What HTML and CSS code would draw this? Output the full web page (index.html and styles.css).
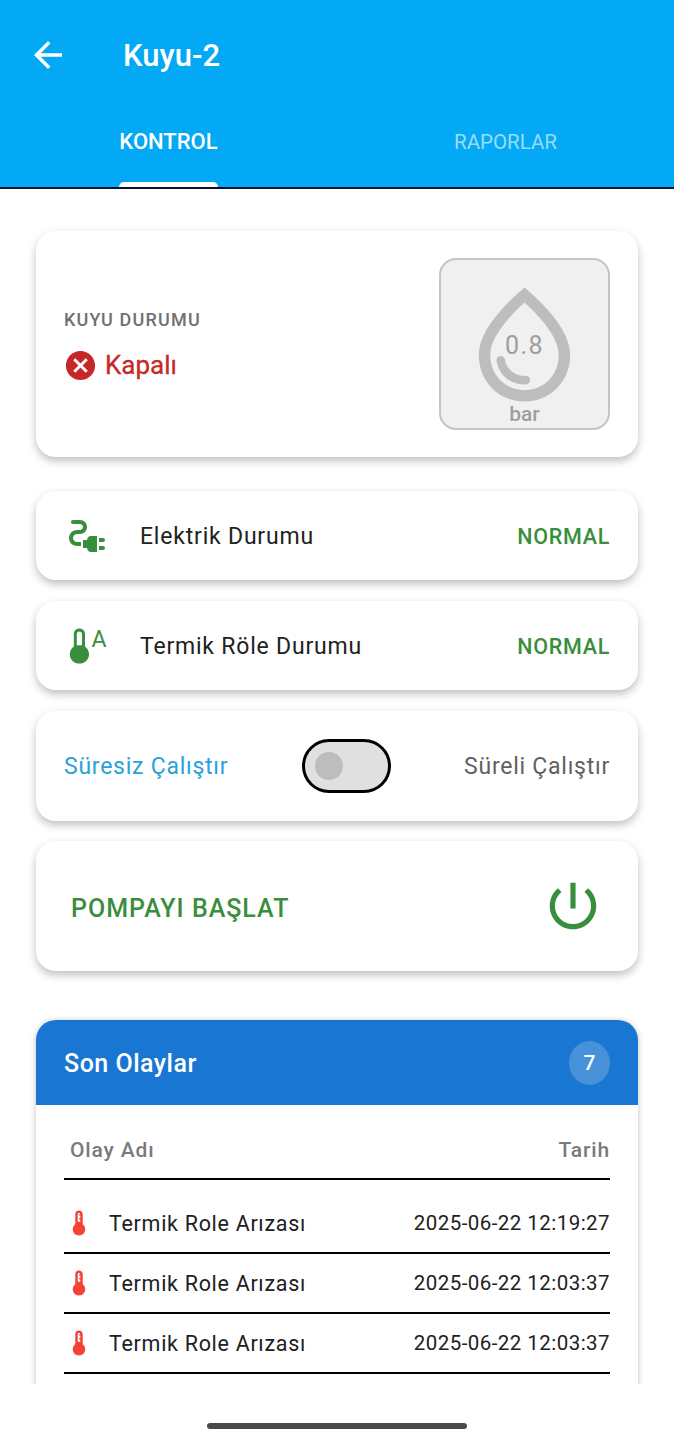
FILE: index.html
```html
<!DOCTYPE html>
<html lang="tr">
<head>
    <meta charset="UTF-8">
    <meta name="viewport" content="width=device-width, initial-scale=1.0">
    <title>Kuyu-2</title>
    <link rel="stylesheet" href="styles.css">
</head>
<body>
    <header class="app-header">
        <div class="top-bar">
            <svg class="back-icon" viewBox="0 0 24 24"><path d="M20 11H7.83l5.59-5.59L12 4l-8 8 8 8 1.41-1.41L7.83 13H20v-2z"/></svg>
            <h1 class="page-title">Kuyu-2</h1>
        </div>
        <nav class="tabs">
            <div class="tab"><span class="tab-label active">KONTROL</span></div>
            <div class="tab"><span class="tab-label">RAPORLAR</span></div>
        </nav>
    </header>

    <main class="content">
        <section class="card status-card">
            <div class="status-info">
                <div class="status-title">KUYU DURUMU</div>
                <div class="status-value">
                    <svg class="cancel-icon" viewBox="0 0 24 24"><path d="M12 2C6.47 2 2 6.47 2 12s4.47 10 10 10 10-4.47 10-10S17.53 2 12 2zm5 13.59L15.59 17 12 13.41 8.41 17 7 15.59 10.59 12 7 8.41 8.41 7 12 10.59 15.59 7 17 8.41 13.41 12 17 15.59z"/></svg>
                    <span>Kapalı</span>
                </div>
            </div>
            <div class="gauge">
                <svg class="drop-icon" viewBox="0 0 24 24"><path d="M12,2c-5.33,4.55-8,8.48-8,11.8c0,4.98,3.8,8.2,8,8.2s8-3.22,8-8.2C20,10.48,17.33,6.55,12,2z M12,20c-3.35,0-6-2.57-6-6.2c0-2.34,1.95-5.44,6-9.14c4.05,3.7,6,6.79,6,9.14C18,17.43,15.35,20,12,20z M7.83,14c.37,0,.67.26.74.62.41,2.22,2.28,2.98,3.64,2.87.43-.02.79.32.79.75,0,.4-.32.73-.72.75-2.13.13-4.62-1.09-5.19-4.12C7.01,14.42,7.37,14,7.83,14z"/></svg>
                <span class="gauge-value">0.8</span>
                <span class="gauge-unit">bar</span>
            </div>
        </section>

        <section class="card info-card first-info">
            <svg class="info-icon" viewBox="0 0 24 24"><path d="M21 14c0-.55-.45-1-1-1h-2v2h2c.55 0 1-.45 1-1zm-1 3h-2v2h2c.55 0 1-.45 1-1s-.45-1-1-1zm-8-3h-2v4h2c0 1.1.9 2 2 2h3v-8h-3c-1.1 0-2 .9-2 2z"/><path d="M5 13c0-1.1.9-2 2-2h1.5c1.93 0 3.5-1.57 3.5-3.5S10.43 4 8.5 4H5c-.55 0-1 .45-1 1s.45 1 1 1h3.5c.83 0 1.5.67 1.5 1.5S9.33 9 8.5 9H7c-2.21 0-4 1.79-4 4s1.79 4 4 4h2v-2H7c-1.1 0-2-.9-2-2z"/></svg>
            <span class="info-label">Elektrik Durumu</span>
            <span class="info-state">NORMAL</span>
        </section>

        <section class="card info-card">
            <svg class="info-icon" viewBox="0 0 24 24"><path fill-rule="evenodd" d="M8.200 3.200C6.600 3.200 5.400 4.400 5.400 6V12.300C4.100 13.200 3.400 14.700 3.400 16.100 3.400 18.700 5.500 20.800 8.200 20.800 10.900 20.800 13 18.700 13 16.100 13 14.700 12.300 13.200 11 12.300V6C11 4.400 9.800 3.200 8.200 3.200zM8.200 4.700C8.900 4.700 9.500 5.300 9.500 6V11.600H6.900V6C6.900 5.300 7.500 4.700 8.200 4.700z"/><text class="thermo-letter" x="14.300" y="12.500">A</text></svg>
            <span class="info-label">Termik Röle Durumu</span>
            <span class="info-state">NORMAL</span>
        </section>

        <section class="card mode-card">
            <span class="mode-active">Süresiz Çalıştır</span>
            <div class="switch"><div class="switch-thumb"></div></div>
            <span class="mode-idle">Süreli Çalıştır</span>
        </section>

        <section class="card pump-card">
            <span class="pump-label">POMPAYI BAŞLAT</span>
            <svg class="power-icon" viewBox="0 0 24 24"><path d="M13 3h-2v10h2V3zm4.830 2.170l-1.420 1.420C17.990 7.860 19 9.810 19 12c0 3.870-3.130 7-7 7s-7-3.130-7-7c0-2.190 1.010-4.140 2.580-5.420L6.170 5.170C4.230 6.820 3 9.260 3 12c0 4.970 4.030 9 9 9s9-4.030 9-9c0-2.740-1.230-5.180-3.170-6.830z"/></svg>
        </section>

        <section class="events-card">
            <div class="events-head">
                <span class="events-title">Son Olaylar</span>
                <span class="events-badge">7</span>
            </div>
            <table class="events-table">
                <thead>
                    <tr>
                        <th class="col-name">Olay Adı</th>
                        <th class="col-date">Tarih</th>
                    </tr>
                </thead>
                <tbody>
                    <tr>
                        <td><div class="event-name"><svg class="event-icon" viewBox="0 0 24 24"><path d="M15 13V5c0-1.660-1.340-3-3-3S9 3.340 9 5v8c-1.210.910-2 2.370-2 4 0 2.760 2.240 5 5 5s5-2.240 5-5c0-1.630-.790-3.090-2-4zm-4-8c0-.550.450-1 1-1s1 .450 1 1h-1v1h1v2h-1v1h1v2h-2V5z"/></svg>Termik Role Arızası</div></td>
                        <td class="col-date">2025-06-22 12:19:27</td>
                    </tr>
                    <tr>
                        <td><div class="event-name"><svg class="event-icon" viewBox="0 0 24 24"><path d="M15 13V5c0-1.660-1.340-3-3-3S9 3.340 9 5v8c-1.210.910-2 2.370-2 4 0 2.760 2.240 5 5 5s5-2.240 5-5c0-1.630-.790-3.090-2-4zm-4-8c0-.550.450-1 1-1s1 .450 1 1h-1v1h1v2h-1v1h1v2h-2V5z"/></svg>Termik Role Arızası</div></td>
                        <td class="col-date">2025-06-22 12:03:37</td>
                    </tr>
                    <tr>
                        <td><div class="event-name"><svg class="event-icon" viewBox="0 0 24 24"><path d="M15 13V5c0-1.660-1.340-3-3-3S9 3.340 9 5v8c-1.210.910-2 2.370-2 4 0 2.760 2.240 5 5 5s5-2.240 5-5c0-1.630-.790-3.090-2-4zm-4-8c0-.550.450-1 1-1s1 .450 1 1h-1v1h1v2h-1v1h1v2h-2V5z"/></svg>Termik Role Arızası</div></td>
                        <td class="col-date">2025-06-22 12:03:37</td>
                    </tr>
                </tbody>
            </table>
        </section>
    </main>

    <footer class="home-area"><div class="home-bar"></div></footer>
</body>
</html>
```

FILE: styles.css
```css
* {
    box-sizing: border-box;
}
body {
    font-family: Roboto, sans-serif;
    margin: 0;
    width: 674px;
    height: 1440px;
    overflow: hidden;
    background: #fff;
}

/* Header */
.app-header {
    background: #03a9f4;
    border-bottom: 2px solid #0a1230;
    height: 189px;
}
.top-bar {
    display: flex;
    align-items: center;
    height: 110px;
    padding-left: 27px;
}
.back-icon {
    width: 42px;
    height: 42px;
    fill: #fff;
}
.page-title {
    margin: 0 0 0 54px;
    font-size: 31px;
    font-weight: 500;
    color: #fff;
}
.tabs {
    display: flex;
    height: 77px;
}
.tab {
    flex: 1;
    display: flex;
    justify-content: center;
}
.tab-label {
    position: relative;
    padding-top: 20px;
    font-size: 20.500px;
    line-height: 24px;
    color: rgba(255, 255, 255, 0.6);
}
.tab-label.active {
    font-size: 22px;
    font-weight: 500;
    color: #fff;
}
.tab-label.active::after {
    content: "";
    position: absolute;
    left: 0;
    right: 0;
    bottom: 0;
    height: 5px;
    background: #fff;
    border-radius: 5px 5px 0 0;
}

/* Content */
.content {
    height: 1195px;
    padding: 42px 36px 0;
    overflow: hidden;
}
.card {
    display: flex;
    align-items: center;
    background: #fff;
    border-radius: 20px;
    box-shadow: 0 4px 8px rgba(0, 0, 0, 0.25);
}
.status-card {
    justify-content: space-between;
    height: 226px;
    padding: 0 28px;
}
.status-info {
    padding-top: 3px;
}
.status-title {
    font-size: 18px;
    font-weight: 500;
    letter-spacing: 1.2px;
    color: #707070;
}
.status-value {
    display: flex;
    align-items: center;
    gap: 7px;
    margin-top: 18px;
    font-size: 26px;
    color: #c62828;
}
.status-value span {
    -webkit-text-stroke: 0.3px #c62828;
}
.cancel-icon {
    width: 35px;
    height: 35px;
    margin-left: -1px;
    fill: #c62828;
}
.gauge {
    position: relative;
    width: 171px;
    height: 172px;
    background: #f0f0f0;
    border: 2px solid #c4c4c4;
    border-radius: 17px;
}
.drop-icon {
    position: absolute;
    top: 16px;
    left: 15px;
    width: 137px;
    height: 137px;
    fill: #bdbdbd;
}
.gauge-value {
    position: absolute;
    top: 71px;
    left: 0;
    right: 0;
    text-align: center;
    font-size: 25px;
    line-height: 30px;
    letter-spacing: 1.5px;
    color: #9e9e9e;
}
.gauge-unit {
    position: absolute;
    top: 142px;
    left: 0;
    right: 0;
    text-align: center;
    font-size: 21px;
    line-height: 24px;
    font-weight: 500;
    color: #9e9e9e;
}

.info-card {
    height: 89px;
    margin-top: 21px;
    padding: 0 28px 0 27px;
}
.first-info {
    margin-top: 34px;
}
.info-icon {
    width: 48px;
    height: 48px;
    fill: #388e3c;
}
.thermo-letter {
    font-family: Roboto, sans-serif;
    font-size: 11.500px;
    fill: #388e3c;
}
.info-label {
    flex: 1;
    margin-left: 29px;
    padding-top: 2px;
    font-size: 23px;
    letter-spacing: 0.8px;
    color: #212121;
}
.info-state {
    padding-top: 2px;
    font-size: 21.500px;
    font-weight: 500;
    letter-spacing: 0.7px;
    color: #388e3c;
}

.mode-card {
    justify-content: space-between;
    height: 110px;
    margin-top: 21px;
    padding: 0 28px;
    font-size: 23px;
    letter-spacing: 0.75px;
}
.mode-active {
    color: #29a3d6;
}
.mode-idle {
    color: #616161;
}
.switch {
    display: flex;
    align-items: center;
    width: 89px;
    height: 54px;
    padding-left: 10px;
    background: #e0e0e0;
    border: 3px solid #000;
    border-radius: 27px;
}
.switch-thumb {
    width: 28px;
    height: 28px;
    background: #bdbdbd;
    border-radius: 50%;
}

.pump-card {
    justify-content: space-between;
    height: 130px;
    margin-top: 20px;
    padding: 0 34px 0 35px;
}
.pump-label {
    padding-top: 5px;
    font-size: 25px;
    font-weight: 500;
    letter-spacing: 1px;
    color: #388e3c;
}
.power-icon {
    width: 62px;
    height: 62px;
    fill: #388e3c;
}

/* Son Olaylar */
.events-card {
    margin-top: 49px;
    height: 500px;
    background: #fff;
    border-radius: 20px;
    box-shadow: 0 1px 6px rgba(0, 0, 0, 0.25);
    overflow: hidden;
}
.events-head {
    display: flex;
    justify-content: space-between;
    align-items: center;
    height: 85px;
    padding: 0 28px;
    background: #1976d2;
    color: #fff;
}
.events-title {
    padding-top: 1px;
    font-size: 25px;
    font-weight: 500;
    letter-spacing: 0.5px;
}
.events-badge {
    display: flex;
    align-items: center;
    justify-content: center;
    width: 41px;
    height: 44px;
    background: rgba(255, 255, 255, 0.2);
    border-radius: 50%;
    font-size: 21px;
    font-weight: 500;
}
.events-table {
    width: 546px;
    margin: 0 28px;
    border-collapse: collapse;
}
.events-table th {
    height: 74px;
    padding: 16px 0 0;
    font-size: 21px;
    font-weight: 500;
    letter-spacing: 0.85px;
    color: #7a7a7a;
    border-bottom: 2px solid #000;
}
.events-table .col-name {
    text-align: left;
    padding-left: 6px;
}
.events-table td {
    height: 60px;
    padding: 0;
    font-size: 20.500px;
    letter-spacing: 0.45px;
    color: #212121;
    border-bottom: 2px solid #000;
}
.events-table tbody tr:first-child td {
    height: 74px;
    padding-top: 14px;
}
.events-table .col-date {
    text-align: right;
}
.event-name {
    display: flex;
    align-items: center;
    gap: 15px;
    font-size: 21.500px;
    letter-spacing: 0.7px;
}
.event-icon {
    width: 30px;
    height: 30px;
    fill: #f44336;
}

/* Alt bar */
.home-area {
    display: flex;
    justify-content: center;
    padding-top: 39px;
}
.home-bar {
    width: 260px;
    height: 6px;
    background: #4a4a4a;
    border-radius: 3px;
}
```
